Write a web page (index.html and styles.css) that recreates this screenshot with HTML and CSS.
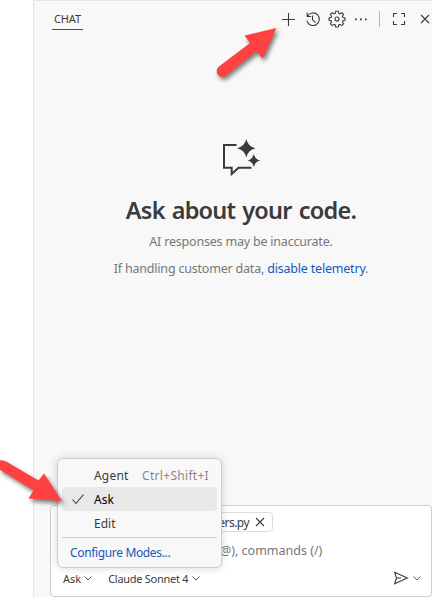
FILE: index.html
```html
<!DOCTYPE html>
<html lang="en">
<head>
<meta charset="utf-8">
<title>Chat</title>
<link rel="stylesheet" href="styles.css">
</head>
<body>
<main class="panel">
  <header class="bar">
    <div class="tab"><span class="t-tab">CHAT</span></div>
    <div class="tools">
      <svg class="i-plus" width="16" height="16" viewBox="0 0 16 16"><path d="M8.500 2v13M2 8.500h13"/></svg>
      <svg class="i-history" width="16" height="16" viewBox="0 0 16 16"><path d="M2.200 1.500v4h4M2.500 5.200A6.300 6.300 0 1 1 1.900 9.600M7.500 4.500v4.300l3 2.800"/></svg>
      <svg class="i-gear" width="18" height="18" viewBox="0 0 18 18"><path d="M7.7 1.2h2.6l.4 2 1.3.6 1.8-1.2 1.8 1.8-1.2 1.8.5 1.3 2.1.4v2.4l-2.1.4-.5 1.3 1.2 1.8-1.8 1.8-1.8-1.2-1.3.6-.4 2H7.7l-.4-2-1.3-.6-1.8 1.2-1.8-1.8 1.2-1.8-.5-1.3-2.1-.4V7.9l2.1-.4.5-1.3-1.2-1.8 1.8-1.8L6 3.8l1.3-.6z"/><circle cx="9" cy="9" r="2"/></svg>
      <svg class="i-dots" width="16" height="16" viewBox="0 0 16 16"><path class="solid" d="M2 7.500h1.700v1.700H2zM7 7.500h1.700v1.700H7zM12 7.500h1.700v1.700h-1.700z"/></svg>
      <span class="sep"></span>
      <svg class="i-full" width="14" height="14" viewBox="0 0 14 14"><path d="M1.500 5V1.500H5M9 1.500h3.500V5M12.500 9v3.500H9M5 12.500H1.500V9"/></svg>
      <svg class="i-close" width="12" height="12" viewBox="0 0 12 12"><path d="M2 2l8 8M10 2l-8 8"/></svg>
    </div>
  </header>
  <section class="welcome">
    <svg class="logo" width="42" height="40" viewBox="0 0 42 40"><path class="bubble" d="M17.500 6H5V28.700H12.700V35L19.500 28.700H32.500"/><path class="solid" d="M27.300 0Q28.900 7.600 36.500 9.300Q28.900 11 27.300 18.600Q25.700 11 18 9.300Q25.700 7.600 27.300 0ZM34.800 15Q35.900 20.300 41.200 21.500Q35.900 22.700 34.800 28Q33.700 22.700 28.400 21.500Q33.700 20.300 34.800 15Z"/></svg>
    <h1>Ask about your code.</h1>
    <p class="t-note">AI responses may be inaccurate.</p>
    <p class="t-data">If handling customer data, <a>disable telemetry</a>.</p>
  </section>
  <section class="composer">
    <div class="chip"><span class="t-file">ers.py</span><svg width="12" height="12" viewBox="0 0 12 12"><path d="M2 2l8 8M10 2l-8 8"/></svg></div>
    <div class="prompt"><span class="t-prompt">@), commands (/)</span></div>
    <footer class="controls">
      <span class="t-mode">Ask</span>
      <svg class="chev" width="10" height="8" viewBox="0 0 10 8"><path d="M1.500 2.500L5 6 8.500 2.500"/></svg>
      <span class="t-model">Claude Sonnet 4</span>
      <svg class="chev" width="10" height="8" viewBox="0 0 10 8"><path d="M1.500 2.500L5 6 8.500 2.500"/></svg>
      <svg class="send" width="16" height="14" viewBox="0 0 16 14"><path d="M1.700 1.200L14.300 7 1.700 12.800 3.500 7zM3.500 7H8"/></svg>
      <svg class="chev" width="10" height="8" viewBox="0 0 10 8"><path d="M1.500 2.500L5 6 8.500 2.500"/></svg>
    </footer>
  </section>
</main>
<div class="menu">
  <div class="item"><span class="t-agent">Agent</span><span class="t-keys">Ctrl+Shift+I</span></div>
  <div class="item selected"><svg width="14" height="12" viewBox="0 0 14 12"><path d="M1.500 6.500L5 10.500 12.500 1.500"/></svg><span class="t-ask">Ask</span></div>
  <div class="item"><span class="t-edit">Edit</span></div>
  <div class="rule"></div>
  <div class="configure"><span class="t-conf">Configure Modes...</span></div>
</div>
<svg class="arrows" width="432" height="597" viewBox="0 0 432 597">
  <path d="M276.500 28L262.700 58.500 256.500 51 225 76Q220.500 78.500 217.500 74.500Q215.500 69.500 219 66.500L250 43 244.500 35.500Z"/>
  <path d="M-3 461.500Q2 459 7 462L38.500 480.500 44 473.500 62 501 28.500 498.500 33.500 490.500 2 471Q-3 469-3 465Z"/>
</svg>
</body>
</html>
```
FILE: styles.css
```css
* { box-sizing: border-box; }
body { margin: 0; width: 432px; height: 597px; overflow: hidden; background: #fff; color: #3b3b3b; font-family: "Noto Sans", "Open Sans", sans-serif; font-size: 12px; }
svg { flex: none; fill: none; stroke: #3b3b3b; stroke-width: 1.1; }
svg .solid { fill: #3b3b3b; stroke: none; }
span, h1, p { white-space: nowrap; }
.panel { margin-left: 33px; width: 399px; height: 597px; background: #f8f8f8; border-left: 1px solid #e5e5e5; border-top: 1px solid #e5e5e5; display: flex; flex-direction: column; overflow: hidden; }
.bar { height: 36px; flex: none; display: flex; justify-content: space-between; padding-left: 18px; }
.tab { width: 31px; height: 29px; border-bottom: 1px solid #005fb8; display: flex; align-items: center; padding: 7px 0 0 2px; }
.t-tab { font-size: 11px; letter-spacing: -.15px; }
.tools { display: flex; align-items: center; height: 36px; }
.i-history { margin-left: 9px; }
.i-gear { margin-left: 7px; }
.i-dots { margin-left: 7px; }
.sep { width: 1px; height: 16px; background: #b8b8b8; margin-left: 10px; }
.i-full { margin-left: 12px; }
.i-close { margin-left: 13px; margin-right: 1px; }
.welcome { padding-top: 102px; display: flex; flex-direction: column; align-items: center; width: 414px; flex: none; }
.logo { margin-right: 2px; }
.bubble { stroke-width: 2; }
h1 { font-size: 23.5px; line-height: 32px; font-weight: 600; margin: 15px 0 0; letter-spacing: -.75px; word-spacing: 1.5px; }
p { font-size: 12.5px; line-height: 20px; color: #777; margin: 6px 0 0; letter-spacing: -.2px; }
.t-data { margin-top: 7px; }
p a { color: #1558b8; }
.composer { margin: auto 0 0 16px; width: 382px; height: 92px; flex: none; border: 1px solid #cecece; border-radius: 4px; background: #fff; }
.chip { margin: 6px 0 0 120px; width: 102px; height: 20px; border: 1px solid #ddd; border-radius: 4px; display: flex; align-items: center; justify-content: flex-end; gap: 5px; padding-right: 6px; }
.t-file { letter-spacing: -.55px; }
.prompt { height: 36px; padding-left: 169px; display: flex; align-items: center; color: #767676; font-size: 12.5px; }
.controls { height: 20px; display: flex; align-items: center; padding: 0 9px 0 12px; font-size: 11px; }
.chev { stroke-width: .85; }
.t-mode { margin-right: 2px; }
.t-model { margin: 0 3px 0 15px; letter-spacing: -.28px; }
.send { margin-left: auto; margin-right: 3px; }
.menu { position: absolute; left: 57px; top: 458px; width: 165px; height: 110px; border: 1px solid #cecece; border-radius: 6px; background: #f8f8f8; padding: 4px 4px; box-shadow: 0 0 8px rgba(0,0,0,.16); }
.item { height: 24px; display: flex; align-items: center; justify-content: space-between; padding: 0 8px 0 32px; border-radius: 4px; font-size: 12px; }
.t-agent { letter-spacing: .2px; }
.t-keys { color: #888; letter-spacing: .3px; }
.selected { background: #e8e8e8; justify-content: flex-start; padding-left: 9px; color: #000; gap: 9px; }
.rule { height: 1px; background: #cecece; margin: 2px 0 3px; }
.configure { height: 22px; display: flex; align-items: center; padding-left: 8px; color: #1558b8; letter-spacing: -.35px; }
.arrows { position: absolute; left: 0; top: 0; pointer-events: none; filter: drop-shadow(2px 3px 2px rgba(0,0,0,.5)); }
.arrows path { fill: #ff4141; stroke: none; }
```
